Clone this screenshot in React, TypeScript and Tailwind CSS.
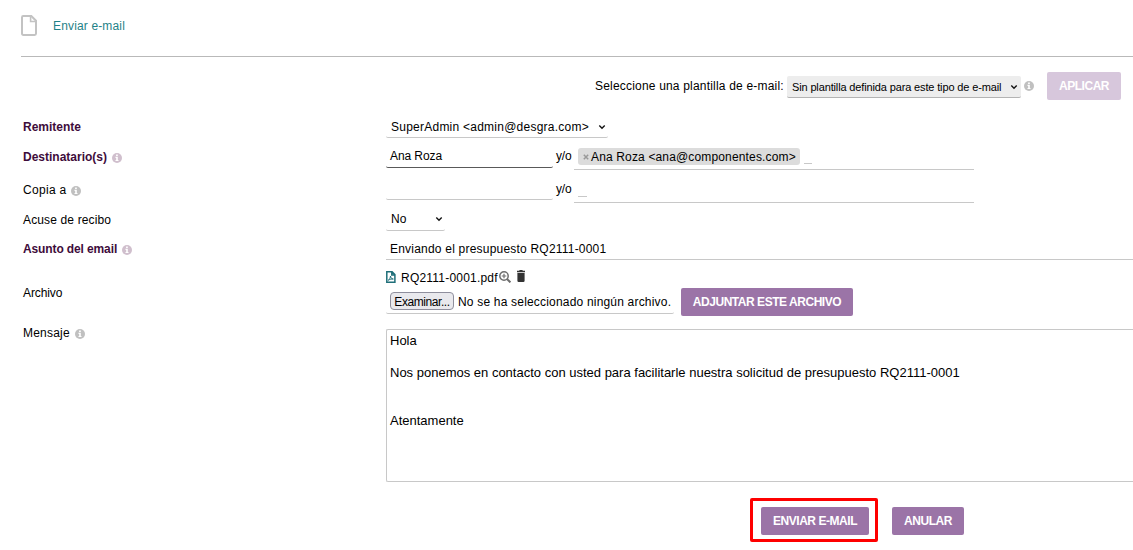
import type { ReactNode } from 'react';

function Info({ className = '' }: { className?: string }) {
  return (
    <svg viewBox="0 0 10 10" className={`h-[10px] w-[10px] shrink-0 ${className}`}>
      <circle cx="5" cy="5" r="5" fill="currentColor" />
      <path d="M4.1 1.6h1.7v1.3H4.1zM3.5 3.8h2.3v3.1h.7v1.1h-3V6.9h.7v-2h-.7z" fill="#fff" />
    </svg>
  );
}

function Chevron({ className = '' }: { className?: string }) {
  return (
    <svg viewBox="0 0 8 6" className={`h-[6px] w-[8px] shrink-0 ${className}`}>
      <path d="M1.3 1.5 4 4.2 6.7 1.5" fill="none" stroke="#111" strokeWidth="1.4" />
    </svg>
  );
}

function Button({ children, className = '' }: { children: ReactNode; className?: string }) {
  return (
    <button className={`flex h-7 shrink-0 items-center justify-center rounded-[2px] bg-[#9b74a7] text-[12px] font-bold tracking-[-0.46px] whitespace-nowrap text-white ${className}`}>
      {children}
    </button>
  );
}

function Row({ label, labelClass, info, height, children }: { label: string; labelClass: string; info?: string; height: string; children: ReactNode }) {
  return (
    <div className={`flex items-start ${height}`}>
      <div className={`flex w-[363px] shrink-0 items-center ${labelClass}`}>
        <span>{label}</span>
        {info && <Info className={info} />}
      </div>
      {children}
    </div>
  );
}

export default function App() {
  return (
    <div className="h-[550px] w-full overflow-hidden bg-white font-['Liberation_Sans',Arial,sans-serif] text-[12px] leading-4 whitespace-nowrap text-black">
      <header className="ml-[21px] flex h-[57px] items-start border-b border-[#b9b9b9]">
        <svg viewBox="0 0 16 21" className="mt-[15px] h-[21px] w-4" fill="none" stroke="#c3c3c3" strokeWidth="2">
          <path d="M2.2 1h8.1L15 5.7v12.9q0 1.4-1.4 1.4H2.4Q1 20 1 18.6V2.4Q1 1 2.2 1Z" />
          <path d="M9.6 1v5.5H15" strokeWidth="1.6" />
        </svg>
        <span className="mt-[18px] ml-4 tracking-[0.15px] text-[#1f8287]">Enviar e-mail</span>
      </header>

      <div className="flex h-[55px] items-start pl-[595px]">
        <span className="mt-[21px] w-[192px] tracking-[0.19px]">Seleccione una plantilla de e-mail:</span>
        <div className="mt-[19px] flex h-[22px] w-[234px] items-center rounded-[2px] border-b border-[#b3b3b3] bg-[#ededed] pl-[5px] text-[11px] tracking-[-0.14px]">
          <span className="w-[218px]">Sin plantilla definida para este tipo de e-mail</span>
          <Chevron />
        </div>
        <Info className="mt-[24px] ml-[3px] text-[#c0c0c0]" />
        <Button className="mt-[15px] ml-[13px] w-[74px] bg-[#d7c7dc]!">APLICAR</Button>
      </div>

      <div className="pl-[23px]">
        <Row label="Remitente" labelClass="pt-[7px] font-bold text-[#3e0c3b]" height="h-[30px]">
          <div className="mt-[4px] flex h-[22px] w-[222px] items-center rounded-b-[2px] border-b border-[#c8c8c8] pl-[5px]">
            <span className="w-[207px] tracking-[0.24px]">SuperAdmin &lt;admin@desgra.com&gt;</span>
            <Chevron />
          </div>
        </Row>

        <Row label="Destinatario(s)" labelClass="pt-[7px] font-bold text-[#3e0c3b]" info="mt-[1px] ml-[5px] text-[#d0bfcd]" height="h-[30px]">
          <div className="h-[26px] w-[167px] rounded-b-[2px] border-b border-[#595959] pt-[6px] pl-1 tracking-[-0.08px]">Ana Roza</div>
          <span className="mt-[6px] w-[21px] pl-[3px] tracking-[-0.2px]">y/o</span>
          <div className="flex h-[28px] w-[400px] items-start border-b border-[#c8c8c8] pl-1">
            <div className="mt-[6px] flex h-[17px] w-[222px] items-center rounded-[3px] bg-[#dcdcdc] pl-[5px]">
              <svg viewBox="0 0 6 6" className="mr-[2px] h-[6px] w-[6px]">
                <path d="m.8.8 4.4 4.4M5.2.8.8 5.2" stroke="#999" strokeWidth="1.5" />
              </svg>
              <span className="tracking-[0.15px]">Ana Roza &lt;ana@componentes.com&gt;</span>
            </div>
            <span className="mt-[21px] ml-1 h-px w-2 bg-[#c8c8c8]" />
          </div>
        </Row>

        <Row label="Copia a" labelClass="pt-[10px] tracking-[0.3px]" info="mt-[1px] ml-[5px] text-[#c0c0c0]" height="h-[33px]">
          <div className="h-[28px] w-[167px] rounded-b-[2px] border-b border-[#c8c8c8]" />
          <span className="mt-[9px] w-[21px] pl-[3px] tracking-[-0.2px]">y/o</span>
          <div className="flex h-[31px] w-[400px] items-start border-b border-[#c8c8c8] pl-1">
            <span className="mt-[24px] h-px w-[9px] bg-[#c8c8c8]" />
          </div>
        </Row>

        <Row label="Acuse de recibo" labelClass="pt-[7px] tracking-[0.14px]" height="h-[29px]">
          <div className="mt-[3px] flex h-[23px] w-[59px] items-center rounded-b-[2px] border-b border-[#c8c8c8] pl-[5px]">
            <span className="w-[44px]">No</span>
            <Chevron />
          </div>
        </Row>

        <Row label="Asunto del email" labelClass="pt-[7px] font-bold tracking-[-0.12px] text-[#3e0c3b]" info="mt-[1px] ml-[5px] text-[#d0bfcd]" height="h-[30px]">
          <div className="h-[26px] flex-1 border-b border-[#c8c8c8] pt-[7px] pl-1 tracking-[0.21px]">Enviando el presupuesto RQ2111-0001</div>
        </Row>

        <Row label="Archivo" labelClass="pt-[21px] tracking-[-0.1px]" height="h-[59px]">
          <div>
            <div className="flex h-[24px] items-start">
              <svg viewBox="0 0 10 12" className="mt-[7px] h-3 w-[10px]" fill="none" stroke="#1f6f79">
                <path d="M.8.8h5.3L8.9 3.6v7.6H.8zM5.8 1v3h3" strokeWidth="1.5" />
                <path d="M2.3 9.2c1.3-.8 2-2.4 2.2-4.2.2 1.9 1 2.8 2.8 3-1.8-.1-3.3.2-5 1.2Z" strokeWidth="1" />
              </svg>
              <span className="mt-[6px] ml-[5px] w-[97px] tracking-[0.21px]">RQ2111-0001.pdf</span>
              <svg viewBox="0 0 12 12" className="mt-[7px] ml-[1px] h-3 w-3" fill="none" stroke="#6e6e6e">
                <circle cx="5" cy="5" r="4.2" strokeWidth="1.5" />
                <path d="m8 8 3.4 3.4" strokeWidth="2" />
                <path d="M2.7 5h4.6M5 2.7v4.6" strokeWidth="1.2" />
              </svg>
              <svg viewBox="0 0 8 12" className="mt-[6px] ml-[6px] h-3 w-2" fill="#333">
                <path d="M0 .8h2.4V0h3.2v.8H8v1.5H0zM.4 2.9h7.2v7.9q0 1.2-1.2 1.2H1.6Q.4 12 .4 10.8z" />
              </svg>
            </div>
            <div className="flex items-start">
              <div className="flex h-[26px] w-[288px] items-start rounded-b-[2px] border-b border-[#c8c8c8] pl-1">
                <span className="mt-[4px] flex h-[18px] w-16 items-center justify-center rounded-[4px] border border-[#8f8f9d] bg-[#e9e9ed] pt-[2px] tracking-[-0.42px]">Examinar...</span>
                <span className="mt-[6px] ml-1 tracking-[0.19px]">No se ha seleccionado ningún archivo.</span>
              </div>
              <Button className="ml-[7px] w-[172px]">ADJUNTAR ESTE ARCHIVO</Button>
            </div>
          </div>
        </Row>

        <Row label="Mensaje" labelClass="pt-[2px] tracking-[0.2px]" info="mt-[1px] ml-[5px] text-[#c0c0c0]" height="h-[175px]">
          <div className="mt-[6px] h-[153px] flex-1 rounded-l-[2px] border border-r-0 border-[#c8c8c8] pt-[3px] pl-[3px] text-[13px] whitespace-pre">
            {'Hola\n\nNos ponemos en contacto con usted para facilitarle nuestra solicitud de presupuesto RQ2111-0001\n\n\nAtentamente'}
          </div>
        </Row>
      </div>

      <div className="flex items-start gap-[14px] pl-[750px]">
        <div className="flex h-11 w-32 items-start rounded-[2px] border-3 border-[#fe0000] pt-[6px] pl-2">
          <Button className="w-[108px]">ENVIAR E-MAIL</Button>
        </div>
        <Button className="mt-[9px] w-[72px]">ANULAR</Button>
      </div>
    </div>
  );
}
